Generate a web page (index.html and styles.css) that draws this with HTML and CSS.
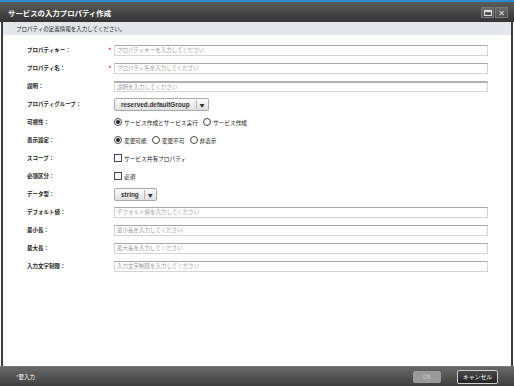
FILE: index.html
```html
<!DOCTYPE html>
<html lang="ja">
<head>
  <meta charset="UTF-8" />
  <title>サービスの入力プロパティ作成</title>
  <link rel="stylesheet" href="styles.css">
</head>
<body>

<div class="dialog">
  <div class="titlebar">
    <span class="title">サービスの入力プロパティ作成</span>
    <span class="win-btns">
      <span class="win-btn"><span class="max-icon"></span></span>
      <span class="win-btn close">✕</span>
    </span>
  </div>
  <div class="subhead">プロパティの定義情報を入力してください。</div>

  <div class="content">
    <div class="row">
      <div class="label">プロパティキー：</div>
      <div class="req">*</div>
      <div class="field"><div class="input">プロパティキーを入力してください</div></div>
    </div>
    <div class="row">
      <div class="label">プロパティ名：</div>
      <div class="req">*</div>
      <div class="field"><div class="input">プロパティ名を入力してください</div></div>
    </div>
    <div class="row">
      <div class="label">説明：</div>
      <div class="req"></div>
      <div class="field"><div class="input thick">説明を入力してください</div></div>
    </div>
    <div class="row">
      <div class="label">プロパティグループ：</div>
      <div class="req"></div>
      <div class="field">
        <div class="select wide"><span class="sel-text">reserved.defaultGroup</span><span class="sel-arrow">▼</span></div>
      </div>
    </div>
    <div class="row">
      <div class="label">可視性：</div>
      <div class="req"></div>
      <div class="field options">
        <span class="opt"><span class="radio on"></span>サービス作成とサービス実行</span>
        <span class="opt"><span class="radio"></span>サービス作成</span>
      </div>
    </div>
    <div class="row">
      <div class="label">表示設定：</div>
      <div class="req"></div>
      <div class="field options">
        <span class="opt"><span class="radio on"></span>変更可能</span>
        <span class="opt"><span class="radio"></span>変更不可</span>
        <span class="opt"><span class="radio"></span>非表示</span>
      </div>
    </div>
    <div class="row">
      <div class="label">スコープ：</div>
      <div class="req"></div>
      <div class="field options">
        <span class="opt"><span class="check"></span>サービス共有プロパティ</span>
      </div>
    </div>
    <div class="row">
      <div class="label">必須区分：</div>
      <div class="req"></div>
      <div class="field options">
        <span class="opt"><span class="check"></span>必須</span>
      </div>
    </div>
    <div class="row">
      <div class="label">データ型：</div>
      <div class="req"></div>
      <div class="field">
        <div class="select"><span class="sel-text">string</span><span class="sel-arrow">▼</span></div>
      </div>
    </div>
    <div class="row">
      <div class="label">デフォルト値：</div>
      <div class="req"></div>
      <div class="field"><div class="input">デフォルト値を入力してください</div></div>
    </div>
    <div class="row">
      <div class="label">最小長：</div>
      <div class="req"></div>
      <div class="field"><div class="input">最小長を入力してください</div></div>
    </div>
    <div class="row">
      <div class="label">最大長：</div>
      <div class="req"></div>
      <div class="field"><div class="input">最大長を入力してください</div></div>
    </div>
    <div class="row">
      <div class="label">入力文字制限：</div>
      <div class="req"></div>
      <div class="field"><div class="input">入力文字制限を入力してください</div></div>
    </div>
  </div>

  <div class="footer">
    <span class="note">*要入力</span>
    <span class="buttons">
      <span class="btn disabled">OK</span>
      <span class="btn">キャンセル</span>
    </span>
  </div>
</div>

</body>
</html>
```

FILE: styles.css
```css
body {
  margin: 0;
  padding: 0;
  background: #ffffff;
  font-family: "Noto Sans CJK JP", "DejaVu Sans", sans-serif;
  font-size: 5.5px;
  color: #222;
}

.dialog {
  width: 514px;
  height: 386px;
  display: flex;
  flex-direction: column;
  box-sizing: border-box;
}

.titlebar {
  height: 22px;
  box-sizing: border-box;
  border-top: 2px solid #2a8ad0;
  background: linear-gradient(#5b5b5b, #333333);
  display: flex;
  align-items: center;
  justify-content: space-between;
  padding: 0 6px 0 8px;
}

.title {
  color: #ffffff;
  font-size: 7.4px;
  font-weight: bold;
}

.win-btns {
  display: flex;
  gap: 1px;
  margin-top: 1px;
}

.win-btn {
  width: 13px;
  height: 11px;
  box-sizing: border-box;
  border: 1px solid #777;
  background: linear-gradient(#6a6a6a, #4c4c4c);
  color: #e0e0e0;
  display: flex;
  align-items: center;
  justify-content: center;
  font-size: 8px;
  font-weight: bold;
  line-height: 1;
}

.max-icon {
  width: 8px;
  height: 6px;
  box-sizing: border-box;
  border: 1px solid #e0e0e0;
  border-top-width: 2px;
}

.subhead {
  height: 13px;
  background: #e3e6eb;
  border-left: 2px solid #3c3c3c;
  border-right: 2px solid #3c3c3c;
  margin: 0 1px;
  padding-left: 13px;
  display: flex;
  align-items: center;
  font-size: 5.5px;
  color: #222;
}

.content {
  flex: 1;
  margin: 0 1px;
  border-left: 2px solid #3c3c3c;
  border-right: 2px solid #3c3c3c;
  padding: 6px 0 0 24px;
  background: #ffffff;
}

.row {
  height: 18px;
  display: flex;
  align-items: center;
}

.label {
  width: 81px;
  font-size: 5.5px;
  font-weight: bold;
  color: #1a1a1a;
}

.req {
  width: 6px;
  color: #d03030;
  font-size: 8px;
  line-height: 1;
  padding-top: 1px;
}

.field {
  width: 374px;
}

.input {
  height: 11px;
  box-sizing: border-box;
  border: 1px solid #d4d4d4;
  border-top-color: #a8a8a8;
  padding-left: 2px;
  color: #9a9a9a;
  font-size: 5.5px;
  line-height: 9px;
}

.input.thick {
  border-top: 2px solid #b0b0b0;
  line-height: 8px;
}

.select {
  display: inline-flex;
  align-items: center;
  height: 13px;
  box-sizing: border-box;
  border: 1px solid #a9a9a9;
  border-radius: 2px;
  background: linear-gradient(#fbfbfb, #e0e0e0);
  font-size: 6.4px;
  font-weight: bold;
  color: #333;
}

.sel-text {
  padding: 0 5px 0 6px;
  font-family: "Liberation Sans", sans-serif;
}

.select.wide .sel-text {
  padding: 0 6px 0 6px;
}

.sel-arrow {
  border-left: 1px solid #b5b5b5;
  height: 9px;
  padding: 0 3px;
  font-size: 5px;
  line-height: 9px;
  color: #333;
}

.options {
  display: flex;
  gap: 5px;
}

.opt {
  display: inline-flex;
  align-items: center;
  color: #1a1a1a;
  font-size: 5.7px;
}

.radio {
  width: 8px;
  height: 8px;
  box-sizing: border-box;
  border: 1px solid #444;
  border-radius: 50%;
  margin-right: 2px;
  position: relative;
}

.radio.on::after {
  content: "";
  position: absolute;
  left: 1px;
  top: 1px;
  width: 4px;
  height: 4px;
  border-radius: 50%;
  background: #222;
}

.check {
  width: 8px;
  height: 8px;
  box-sizing: border-box;
  border: 1px solid #444;
  margin-right: 2px;
}

.footer {
  height: 20px;
  box-sizing: border-box;
  background: linear-gradient(#686868, #3f3f3f);
  border-top: 1px solid #7a7a7a;
  display: flex;
  align-items: center;
  justify-content: space-between;
  padding: 0 16px 0 16px;
}

.note {
  color: #ffffff;
  font-size: 5.5px;
}

.buttons {
  display: flex;
  gap: 16px;
  align-items: center;
}

.btn {
  height: 14px;
  box-sizing: border-box;
  padding: 0 5px;
  border: 1px solid #cfcfcf;
  border-radius: 2px;
  background: linear-gradient(#4a4a4a, #222);
  color: #ffffff;
  font-size: 5.8px;
  display: flex;
  align-items: center;
}

.btn.disabled {
  height: 12px;
  width: 28px;
  justify-content: center;
  border: 1px solid #9a9a9a;
  background: #9a9a9a;
  color: #c8c8c8;
}
```
